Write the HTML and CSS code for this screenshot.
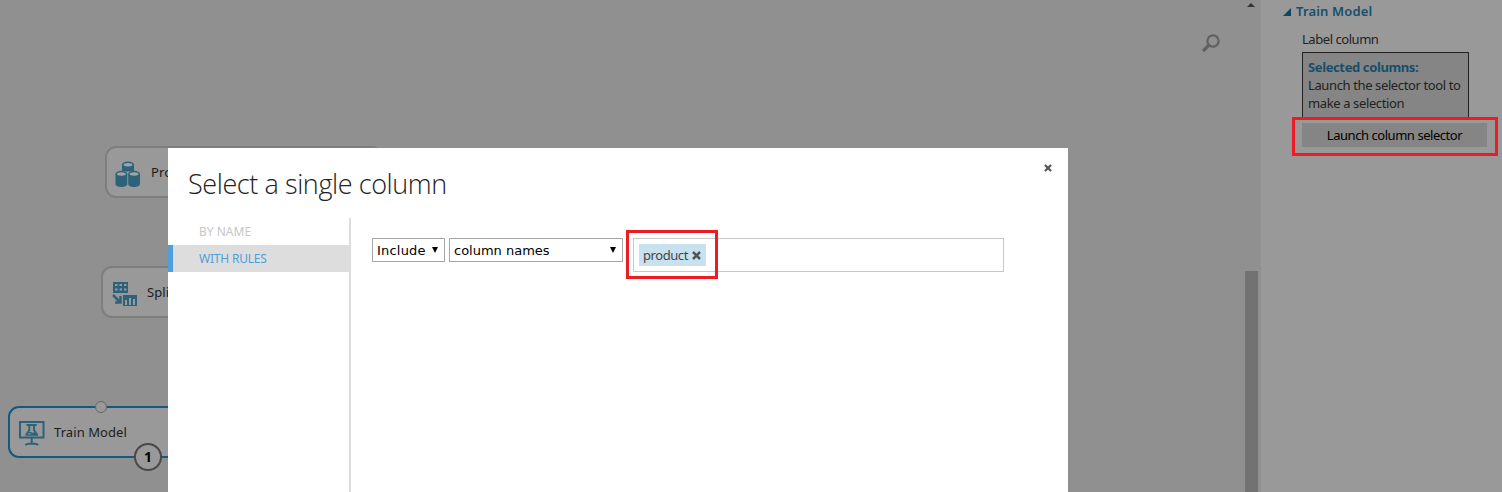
FILE: index.html
```
<!DOCTYPE html>
<html lang="en">
<head>
<meta charset="utf-8">
<title>Select a single column</title>
<link rel="stylesheet" href="styles.css">
</head>
<body>
<div class="app">
  <main class="canvas">
    <div class="node node-project">
      <svg width="26" height="27" viewBox="0 0 26 27">
        <g fill="#2d637a">
          <path d="M7 3.500v7h12v-7z"/><ellipse cx="13" cy="3.500" rx="6" ry="3"/>
          <path d="M.5 13v10c0 4 11.800 4 11.800 0V13zM13.200 13v10c0 4 11.800 4 11.800 0V13z"/>
          <ellipse cx="6.400" cy="13" rx="5.900" ry="3.200"/><ellipse cx="19.100" cy="13" rx="5.900" ry="3.200"/>
        </g>
        <g fill="#a0a5a7"><ellipse cx="13" cy="3.800" rx="4.400" ry="1.700"/><ellipse cx="6.400" cy="13" rx="4.400" ry="1.700"/><ellipse cx="19.100" cy="13" rx="4.400" ry="1.700"/></g>
      </svg>
      <span class="node-label">Pro</span>
    </div>
    <div class="node node-split">
      <svg width="26" height="25" viewBox="0 0 26 25">
        <path fill="#2d637a" d="M1 0h15v11H1zM11 13h14v11H11z"/>
        <path fill="#999" d="M3 2h2.500v2H3zm4.500 0H10v2H7.500zM12 2h2.500v2H12zM3 6.500h2.500v2H3zm4.500 0H10v2H7.500zm4.500 0h2.500v2H12zM13 18h2v5h-2zm4-2h2v7h-2zm4 1h2v6h-2z"/>
        <path fill="none" stroke="#2d637a" stroke-width="2.500" d="M1 13l6.500 6.500M8.500 14v6.500H3"/>
      </svg>
      <span class="node-label">Spli</span>
    </div>
    <div class="node node-train">
      <svg width="26" height="26" viewBox="0 0 26 26">
        <path fill="none" stroke="#2d637a" stroke-width="2" d="M1 1h23.500v15.500H1zM12.700 16.500V22M6.500 24.300c.5-1 2-1.500 3.500-1.500h5.500c1.500 0 3 .5 3.500 1.500"/>
        <path fill="#2d637a" d="M7.500 3h10.200v2H16v3.800l3 4.500q.6 1.500-.8 1.500h-11q-1.400 0-.8-1.500l3-4.500V5h-1.900z"/>
        <path fill="#999" d="M11.300 5h2.700v4.200l1.500 2.300-1.700.2-2.500-1-1.500.5 1.500-2zM8.500 13.200l1-1 2.300.2.800.8z"/>
      </svg>
      <span class="node-label">Train Model</span>
      <i class="port"></i>
      <b class="badge">1</b>
    </div>
    <svg class="search" width="19" height="19" viewBox="0 0 19 19"><g fill="none" stroke="#606060"><circle cx="11" cy="7" r="5.600" stroke-width="2.200"/><path stroke-width="3.200" d="M7 11l-6 6"/></g></svg>
    <i class="scroll-up"></i>
    <i class="scroll-thumb"></i>
  </main>
  <aside class="properties">
    <h2><svg width="8" height="8" viewBox="0 0 8 8"><path fill="#0e4761" d="M8 0v8H0z"/></svg><span class="panel-title">Train Model</span></h2>
    <div class="field-label"><span>Label column</span></div>
    <div class="selected"><strong>Selected columns:</strong><br><span>Launch the selector tool to</span><br><span>make a selection</span></div>
    <button class="launch"><span>Launch column selector</span></button>
  </aside>
</div>

<section class="dialog">
  <header><h1>Select a single column</h1>
    <svg class="close" width="8" height="8" viewBox="0 0 8 8"><path d="M1 1l6 6M7 1L1 7" stroke="#555" stroke-width="2.200"/></svg>
  </header>
  <div class="dialog-body">
    <nav>
      <a>BY NAME</a>
      <a class="active">WITH RULES</a>
    </nav>
    <div class="rules">
      <div class="select include"><span>Include</span><svg width="6" height="6" viewBox="0 0 6 6"><path d="M0 0h6L3 6z"/></svg></div>
      <div class="select names"><span>column names</span><svg width="6" height="6" viewBox="0 0 6 6"><path d="M0 0h6L3 6z"/></svg></div>
      <div class="tokens"><span class="token"><span class="token-text">product</span><svg width="9" height="9" viewBox="0 0 9 9"><path d="M1 1l7 7M8 1L1 8" stroke="#555" stroke-width="2.500"/></svg></span></div>
    </div>
  </div>
</section>
<div class="highlight highlight-launch"></div>
<div class="highlight highlight-token"></div>
</body>
</html>
```

FILE: styles.css
```
* { box-sizing: border-box; }
body { margin: 0; width: 1502px; height: 492px; overflow: hidden; background: #909090; font-family: "Noto Sans", "Open Sans", sans-serif; font-size: 13px; color: #222; position: relative; }
.app { display: flex; height: 492px; }
.canvas { position: relative; width: 1261px; background: #909090; }
.node { position: absolute; width: 278px; height: 52px; display: flex; align-items: center; border: 2px solid #7e7e7e; border-radius: 11px; background: #999; color: #1c1c1c; }
.node-label { white-space: nowrap; letter-spacing: .08px; }
.node-project { left: 105px; top: 146px; padding-left: 8px; gap: 10px; }
.node-split { left: 101px; top: 266px; padding-left: 9px; gap: 9px; }
.node-train { left: 8px; top: 406px; border-color: #145a80; padding-left: 9px; gap: 9px; }
.node svg { flex: none; margin-top: 4px; }
.port { position: absolute; left: 85px; top: -7px; width: 12px; height: 12px; border: 1px solid #666; border-radius: 50%; background: #999; }
.badge { position: absolute; left: 124px; top: 35px; width: 28px; height: 28px; border: 2px solid #484848; border-radius: 50%; background: #999; color: #000; font: bold 14px/23px "Noto Sans", sans-serif; text-align: center; }
.search { position: absolute; left: 1202px; top: 34px; }
.scroll-up { position: absolute; left: 1247px; top: 3px; border: 4px solid transparent; border-top: 0; border-bottom: 4px solid #333; }
.scroll-thumb { position: absolute; left: 1245px; top: 271px; width: 13px; height: 221px; background: #727272; }
.properties { width: 241px; padding: 1px 0 0 22px; background: #999; }
h2 { display: flex; align-items: center; gap: 5px; height: 19px; margin: 0; color: #174f6b; font-size: 13px; font-weight: 600; letter-spacing: .15px; }
h2 svg { margin-top: 2px; }
.field-label { height: 32px; padding: 10px 0 0 19px; line-height: 18px; letter-spacing: -.45px; }
.selected { width: 167px; height: 67px; margin-left: 19px; padding: 5px 0 0 5px; border: 1px solid #202020; background: #858585; line-height: 18px; white-space: nowrap; letter-spacing: -.38px; }
.selected strong { color: #174f6b; }
.launch { display: flex; justify-content: center; align-items: center; width: 185px; height: 24px; margin: 4px 0 0 19px; padding: 0; border: 0; background: #858585; font: 13px "Noto Sans", sans-serif; letter-spacing: -.45px; color: #000; }
.dialog { position: absolute; left: 168px; top: 148px; width: 900px; height: 344px; background: #fff; }
.dialog header { display: flex; justify-content: space-between; height: 70px; padding: 16px 16px 0 20px; }
h1 { margin: 0; font: 300 27px/40px "Open Sans", sans-serif; letter-spacing: -.41px; color: #222; white-space: nowrap; }
.dialog-body { display: flex; height: 274px; }
nav { width: 183px; border-right: 2px solid #ddd; font-size: 12px; }
nav a { display: block; height: 27px; padding-left: 31px; line-height: 27px; color: #c6c6c6; }
nav .active { padding-left: 26px; border-left: 5px solid #4f9fda; background: #ddd; color: #4f9fda; letter-spacing: -.2px; }
.rules { display: flex; align-items: flex-start; padding: 20px 0 0 21px; }
.select { display: flex; align-items: center; justify-content: space-between; height: 24px; padding: 0 6px 0 4px; border: 1px solid #a6a6a6; color: #000; font: 13px "DejaVu Sans", sans-serif; white-space: nowrap; }
.include { width: 73px; margin-right: 4px; letter-spacing: .2px; }
.names { width: 174px; margin-right: 10px; }
.tokens { width: 371px; height: 34px; padding: 5px; border: 1px solid #c8c8c8; }
.token { display: flex; align-items: center; gap: 4px; width: 67px; height: 22px; padding-left: 4px; background: #c7e1ee; color: #444; letter-spacing: -.43px; }
.highlight { position: absolute; border: 3px solid #ed1c24; }
.highlight-launch { left: 1292px; top: 117px; width: 206px; height: 39px; }
.highlight-token { left: 626px; top: 230px; width: 92px; height: 49px; }
```
